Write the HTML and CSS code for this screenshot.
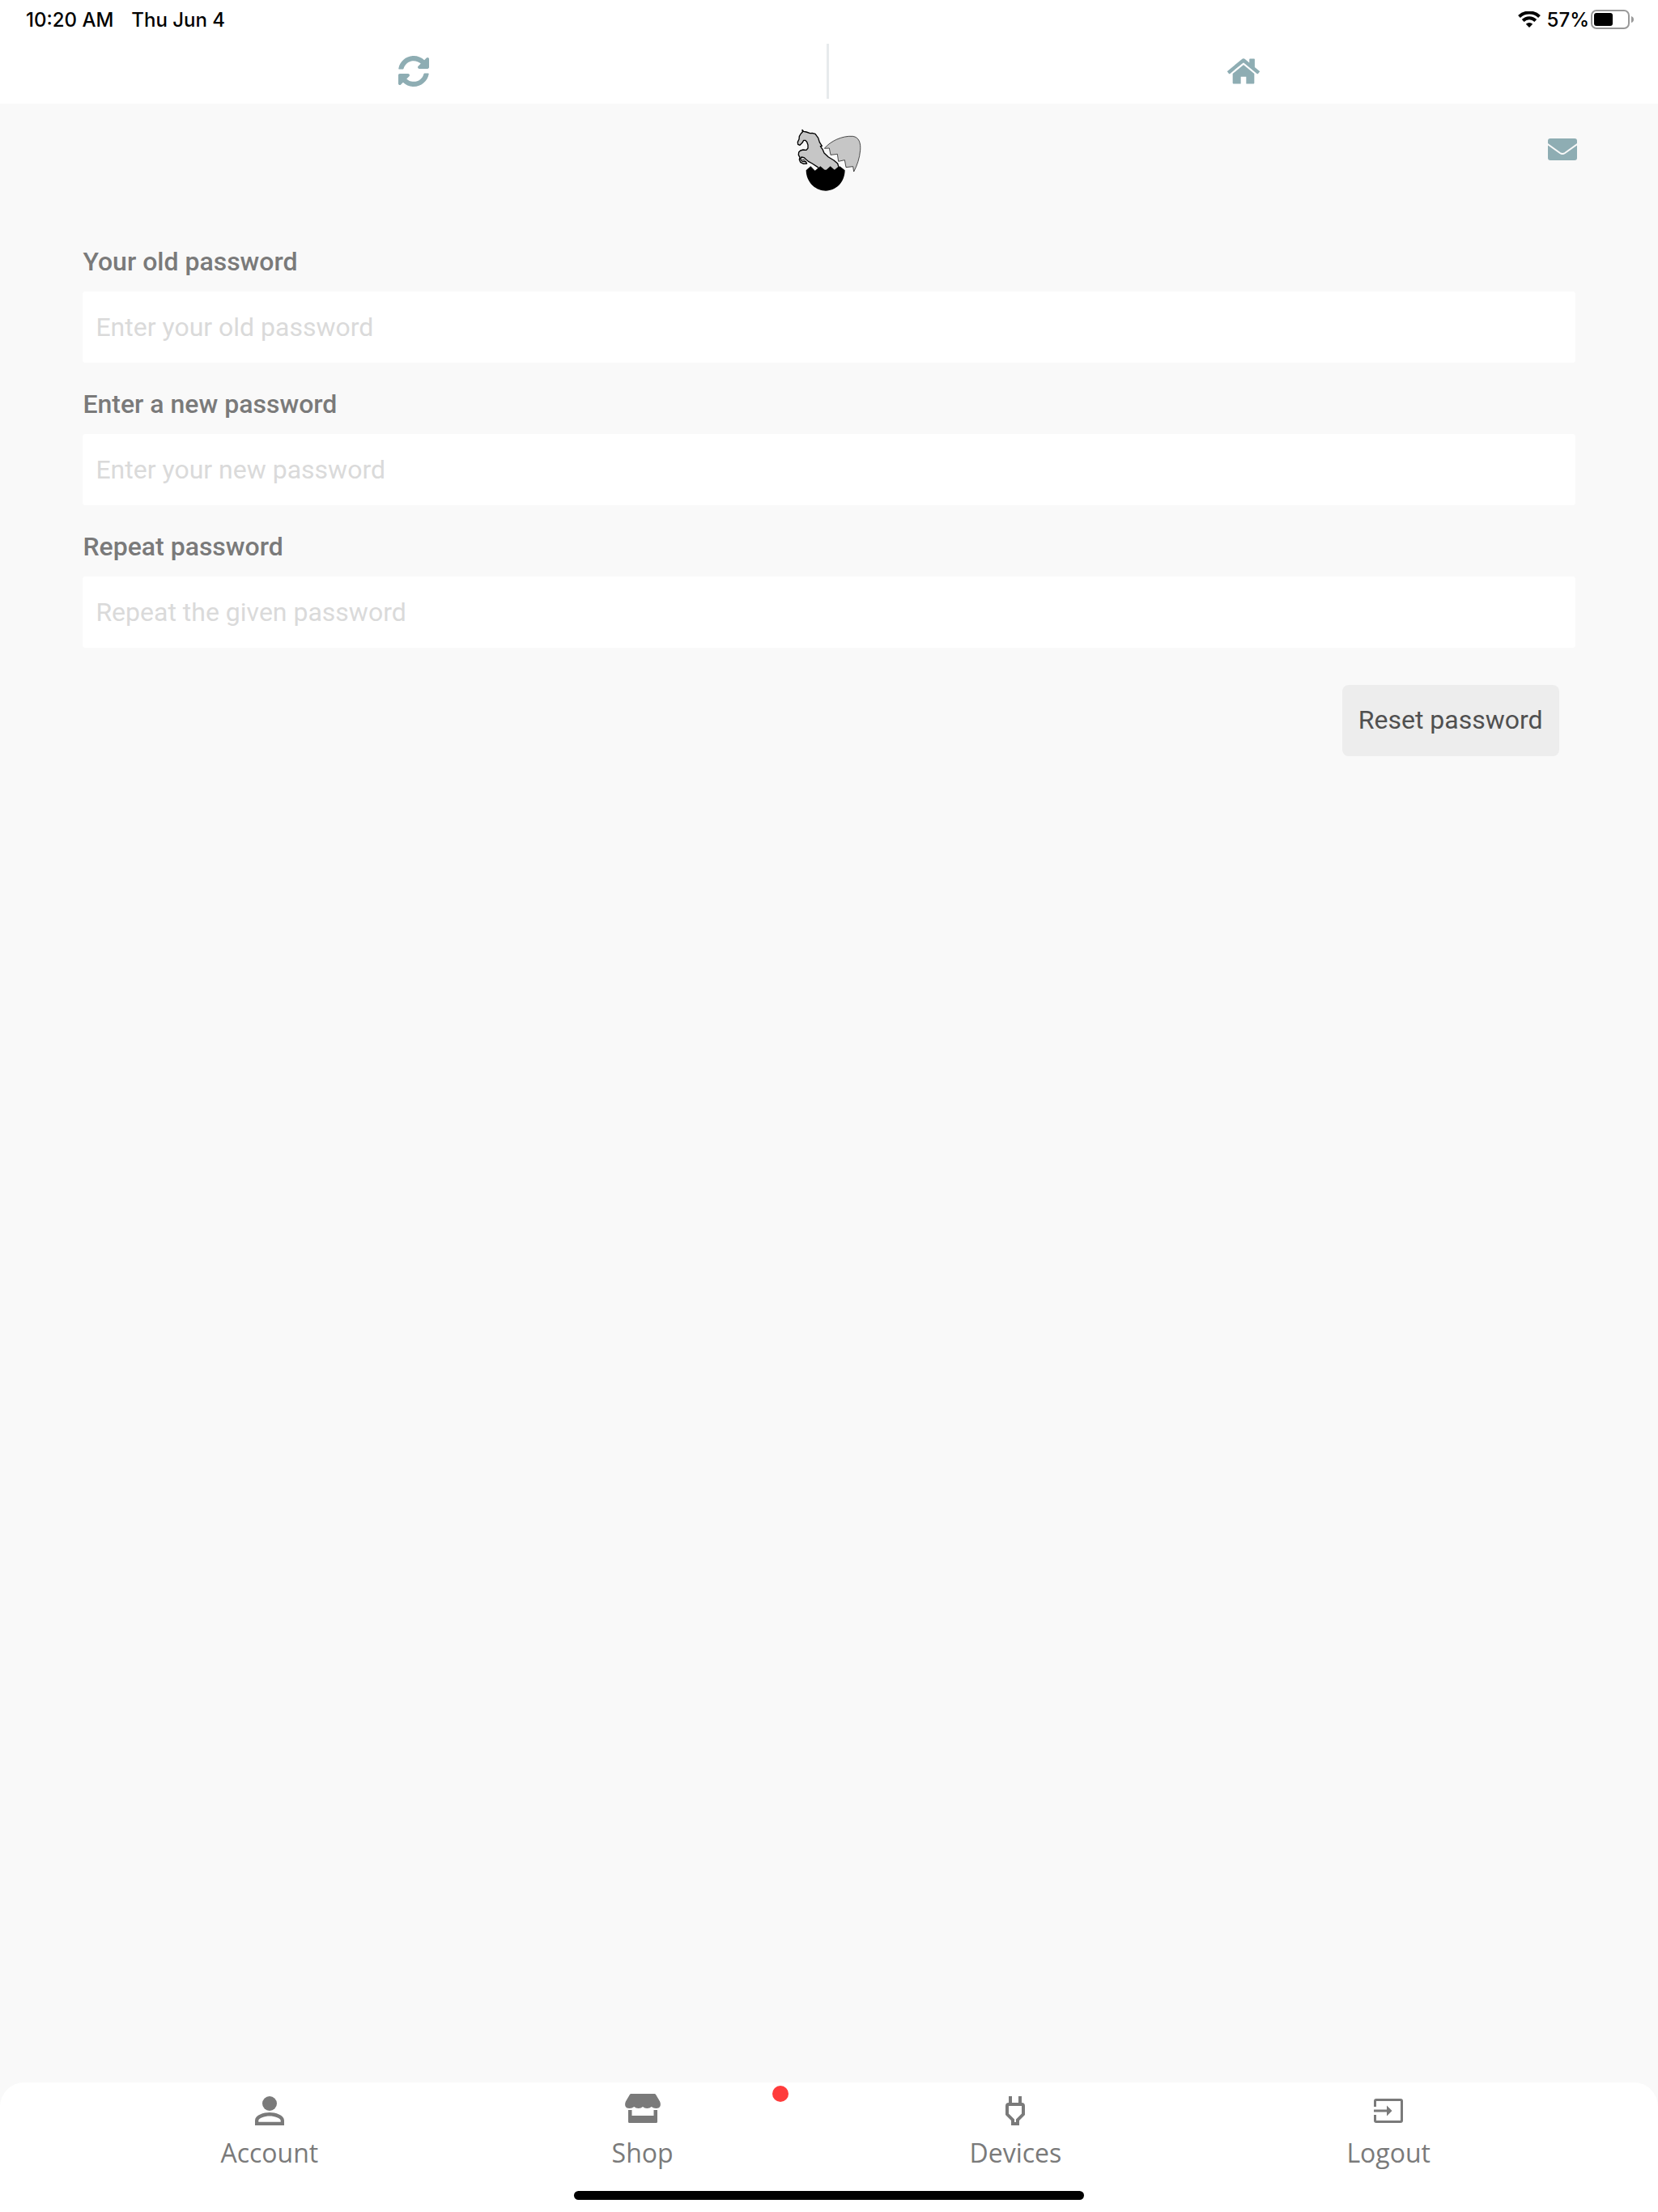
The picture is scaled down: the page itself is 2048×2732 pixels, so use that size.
FILE: index.html
```html
<!DOCTYPE html>
<html lang="en">
  <head>
    <meta charset="utf-8">
    <meta name="viewport" content="width=device-width, initial-scale=1">
    <title>Reset password</title>
    <link rel="stylesheet" href="styles.css">
  </head>
  <body>
    <div class="status-bar">
      <span>10:20 AM</span>
      <span class="status-date">Thu Jun 4</span>
      <svg class="wifi" viewBox="0 0 28 20">
        <path d="M1.5 6.5a18 18 0 0 1 25 0" />
        <path d="M6.2 11.5a11 11 0 0 1 15.6 0" />
        <path class="wifi-dot" d="M14 20l-4.2-4.2a6 6 0 0 1 8.4 0z" />
      </svg>
      <span class="status-percent">57%</span>
      <svg class="battery" viewBox="0 0 54 24">
        <rect class="battery-case" x="1" y="1" width="46" height="22" rx="6" />
        <rect x="4" y="4" width="23" height="16" rx="3" />
        <path class="battery-tip" d="M50 8q3 1 3 4t-3 4z" />
      </svg>
    </div>

    <nav class="top-nav">
      <a href="#refresh" aria-label="Refresh">
        <svg class="icon-refresh" viewBox="8 8 496 496">
          <path d="M370.72 133.28C339.458 104.008 298.888 87.962 255.848 88c-77.458.068-144.328 53.178-162.791 126.85-1.344 5.363-6.122 9.15-11.651 9.15H24.103c-7.498 0-13.194-6.807-11.807-14.176C33.933 94.924 134.813 8 256 8c66.448 0 126.791 26.136 171.315 68.685L463.03 40.97C478.149 25.851 504 36.559 504 57.941V192c0 13.255-10.745 24-24 24H345.941c-21.382 0-32.09-25.851-16.971-40.971l41.75-41.749zM32 296h134.059c21.382 0 32.09 25.851 16.971 40.971l-41.75 41.75c31.262 29.273 71.835 45.319 114.876 45.28 77.418-.07 144.315-53.144 162.787-126.849 1.344-5.363 6.122-9.15 11.651-9.15h57.304c7.498 0 13.194 6.807 11.807 14.176C478.067 417.076 377.187 504 256 504c-66.448 0-126.791-26.136-171.315-68.685L48.97 471.03C33.851 486.149 8 475.441 8 454.059V320c0-13.255 10.745-24 24-24z" />
        </svg>
      </a>
      <a href="#home" aria-label="Home">
        <svg class="icon-home" viewBox="0 0 576 512">
          <path d="M280.37 148.26L96 300.11V464a16 16 0 0 0 16 16l128-.29V352h96v127.69L464 480a16 16 0 0 0 16-16V300L295.67 148.26a12.19 12.19 0 0 0-15.3 0zM571.6 251.47L488 182.56V44.05a12 12 0 0 0-12-12h-72a12 12 0 0 0-12 12v60L318.47 43a48 48 0 0 0-61 0L4.34 251.47a12 12 0 0 0-1.6 16.9l25.5 31A12 12 0 0 0 45.15 301l235.22-193.74a12.19 12.19 0 0 1 15.3 0L530.9 301a12 12 0 0 0 16.9-1.6l25.5-31a12 12 0 0 0-1.7-16.93z" />
        </svg>
      </a>
    </nav>

    <header class="header">
      <svg class="logo" viewBox="72 58 240 234">
        <!-- horse -->
        <path class="logo-grey logo-horse" d="M93 62L98 68 108 70 122 75 130 74 141 77 146 84 152 92 157 108 166 122 160 123 168 134 174 148 190 163 210 175 224 187 228 200 214 212H160L150 200 130 187 117 180 108 173 100 165 90 163 87 170 92 178 106 180 110 187 98 188 86 182 82 172 84 164 79 155 80 145 86 139 96 136 108 137 114 130V118L110 107 104 101 98 101 93 110 84 119 77 116 76 107 81 97 82 86 88 76 94 70z" />
        <path class="logo-line" d="M93 171Q100 172 104 177" />
        <!-- lid of the egg -->
        <path class="logo-grey" d="M175 131C197 104 241 83 280 86C304 89 310 112 308 137C306 166 296 195 284 217L281 198 255 201 250 174 227 179 223 152 198 155 193 130z" />
        <!-- shell -->
        <path d="M107 212L124 197 140 213 160 197 179 213 197 197 214 212 232 197 251 212C250 258 217 288 180 288S108 258 107 212z" />
      </svg>
      <a class="mail" href="#messages" aria-label="Messages">
        <svg class="icon-mail" viewBox="0 0 36 27">
          <rect width="36" height="27" rx="3" />
          <path d="M-1 6.5L15 18q3 2 6 0L37 6.5" />
        </svg>
      </a>
    </header>

    <form class="password-form">
      <div class="field">
        <label for="oldPassword">Your old password</label>
        <input type="password" id="oldPassword" placeholder="Enter your old password">
      </div>
      <div class="field">
        <label for="newPassword">Enter a new password</label>
        <input type="password" id="newPassword" placeholder="Enter your new password">
      </div>
      <div class="field">
        <label for="repeatPassword">Repeat password</label>
        <input type="password" id="repeatPassword" placeholder="Repeat the given password">
      </div>
      <button type="submit">Reset password</button>
    </form>

    <footer class="footer">
      <nav class="tabs">
        <a href="#account">
          <svg viewBox="0 0 48 48">
            <circle cx="24" cy="15" r="9" />
            <path fill-rule="evenodd" d="M24 26c-7 0-18 3-18 10v6h36v-6c0-7-11-10-18-10zm0 4.500c6 0 13.700 2.500 13.700 5.500v1.700H10.300V36c0-3 7.700-5.500 13.700-5.500z" />
          </svg>
          Account
        </a>
        <a href="#shop">
          <svg viewBox="0 0 48 48">
            <path d="M9.500 3h29q1 0 1.600 1l5 8.500C47.100 17.500 45.100 21 40.500 21Q37 21 34.700 19 32.700 21 29.300 21T24 19Q22 21 18.700 21T13.300 19Q11 21 7.500 21C2.900 21 .900 17.500 2.900 12.500l5-8.500q.600-1 1.600-1z" />
            <path d="M6 23h4.500v7h27v-7H42v14.500q0 1.500-1.500 1.500h-33Q6 39 6 37.500z" />
          </svg>
          Shop
          <span class="badge"></span>
        </a>
        <a href="#devices">
          <svg viewBox="0 0 48 48">
            <path d="M16 6h4v8h8V6h4v8q4 0 4 4v11l-7 7v6H19v-6l-7-7V18q0-4 4-4zm0 12v9.500l7 7V38h2v-3.500l7-7V18z" fill-rule="evenodd" />
          </svg>
          Devices
        </a>
        <a href="#logout">
          <svg viewBox="0 0 48 48">
            <path d="M9 9h30q3 0 3 3v24q0 3-3 3H9q-3 0-3-3v-7h3v7h30V12H9v7H6v-7q0-3 3-3z" />
            <path d="M6 22.500h16V17.500l6.500 6.500-6.500 6.500V25.500H6z" />
          </svg>
          Logout
        </a>
      </nav>
      <div class="home-indicator"></div>
    </footer>
  </body>
</html>
```

FILE: styles.css
```css
* {
  box-sizing: border-box;
}
body {
  margin: 0;
  min-height: 100vh;
  display: flex;
  flex-direction: column;
  background-color: #f9f9f9;
  font-family: Roboto, sans-serif;
  font-size: 32px;
}
svg {
  display: block;
}

/* Status bar */
.status-bar {
  display: flex;
  align-items: center;
  height: 48px;
  padding: 0 29px 0 32px;
  background-color: #fff;
  color: #000;
  font-family: Inter, sans-serif;
  font-size: 24px;
  font-weight: 500;
}
.status-date {
  margin-left: 22px;
}
.wifi {
  width: 28px;
  height: 20px;
  margin-left: auto;
  fill: none;
  stroke: #000;
  stroke-width: 4;
}
.wifi-dot {
  fill: #000;
  stroke: none;
}
.status-percent {
  margin: 0 2px 0 8px;
}
.battery {
  width: 54px;
  height: 24px;
}
.battery-case {
  fill: none;
  stroke: #999;
  stroke-width: 2;
}
.battery-tip {
  fill: #999;
}

/* Refresh and home */
.top-nav {
  display: flex;
  align-items: center;
  height: 80px;
  background-color: #fff;
}
.top-nav a {
  width: 50%;
  display: flex;
  align-items: center;
  justify-content: center;
  height: 68px;
}
.top-nav a:first-child {
  border-right: 3px solid #e7eaec;
}
.top-nav svg,
.icon-mail {
  fill: #8eadb3;
}
.icon-refresh {
  width: 38px;
  height: 38px;
}
.icon-home {
  width: 40px;
  height: 36px;
}

.header {
  display: grid;
  grid-template-columns: 1fr auto 1fr;
  padding: 31px 100px 0;
}
.logo {
  grid-column: 2;
  width: 80px;
  height: 78px;
}
.logo-grey {
  fill: #c6c6c6;
  stroke: #000;
  stroke-width: 2;
}
.logo-horse {
  stroke-width: 4;
  stroke-linejoin: round;
}
.logo-line {
  fill: none;
  stroke: #000;
  stroke-width: 3;
}
.mail {
  justify-self: end;
  padding-top: 12px;
}
.icon-mail {
  width: 36px;
  height: 27px;
}
.icon-mail path {
  fill: none;
  stroke: #f9f9f9;
  stroke-width: 2;
}

/* Form */
.password-form {
  flex: 1;
  display: flex;
  flex-direction: column;
  padding: 67px 5% 0;
}
.field {
  margin-bottom: 32px;
}
.field label {
  display: block;
  margin-bottom: 18px;
  color: #7a7a7a;
  font-weight: 500;
  line-height: 38px;
}
.field input {
  display: block;
  width: 100%;
  height: 88px;
  padding: 0 16px;
  border: none;
  border-radius: 4px;
  background-color: #fff;
  color: #505050;
  font: inherit;
}
.field input::placeholder {
  color: #dadada;
}
.password-form button {
  align-self: flex-end;
  height: 88px;
  margin: 14px 20px 0 0;
  padding: 0 20px 2px;
  border: none;
  border-radius: 8px;
  background-color: #ededed;
  color: #505050;
  font: inherit;
}

/* Bottom tabs */
.footer {
  padding: 8px 5% 15px;
  border-radius: 30px 30px 0 0;
  background-color: #fff;
}
.tabs {
  display: grid;
  grid-template-columns: repeat(4, 1fr);
}
.tabs a {
  position: relative;
  display: flex;
  flex-direction: column;
  align-items: center;
  gap: 6px;
  height: 126px;
  padding-top: 3px;
  color: #7a7a7a;
  font-family: "Open Sans", sans-serif;
  line-height: 44px;
  text-decoration: none;
}
.tabs svg {
  width: 48px;
  height: 48px;
  fill: #7a7a7a;
}
.badge {
  position: absolute;
  top: -4px;
  right: 50px;
  width: 20px;
  height: 20px;
  border-radius: 50%;
  background-color: #ff3b3b;
}
.home-indicator {
  max-width: 630px;
  height: 11px;
  margin: 0 auto;
  border-radius: 6px;
  background-color: #000;
}
```
